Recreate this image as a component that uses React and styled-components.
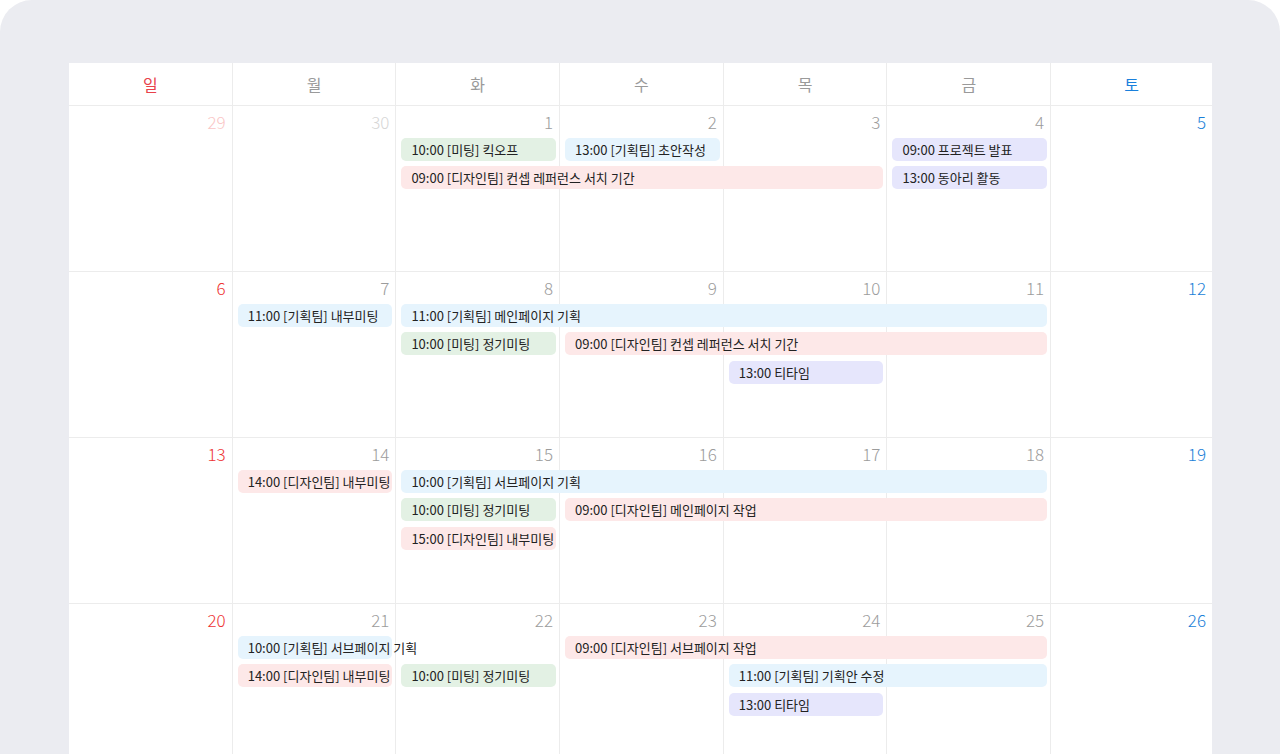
import React from 'react';
import styled, { createGlobalStyle } from 'styled-components';

const GlobalStyle = createGlobalStyle`
  html, body {
    margin: 0;
    background: #ffffff;
    overflow: hidden;
  }
  * {
    box-sizing: border-box;
  }
`;

const Frame = styled.div`
  height: 754px;
  background: #ebecf1;
  border-radius: 32px 32px 0 0;
  padding: 63px 68px 0 69px;
  overflow: hidden;
  font-family: 'Noto Sans CJK KR', 'Noto Sans', sans-serif;
`;

const Calendar = styled.div`
  background: #ffffff;
  width: 1143px;
`;

const columns = 'repeat(6, 163.7px) 1fr';

const HeaderRow = styled.div`
  display: grid;
  grid-template-columns: ${columns};
  height: 43px;
  border-bottom: 1px solid #ececec;
`;

const toneColor = {
  sun: '#e8414a',
  sat: '#1a80dc',
  normal: '#9a9a9a',
};

const HeaderCell = styled.div`
  display: flex;
  align-items: center;
  justify-content: center;
  font-size: 16px;
  color: ${p => toneColor[p.$tone]};
  border-right: ${p => (p.$last ? 'none' : '1px solid #ececec')};
`;

const Week = styled.div`
  display: grid;
  grid-template-columns: ${columns};
  grid-template-rows: 26px repeat(4, 23px) 1fr;
  row-gap: 5.5px;
  height: 166px;
  border-bottom: 1px solid #ececec;
`;

const numColor = {
  sun: '#ee3434',
  sat: '#1b7fd8',
  normal: '#9c9c9c',
  sunFade: '#fac6c6',
  fade: '#d6d6d6',
};

const Day = styled.div`
  grid-row: 1 / -1;
  grid-column: ${p => p.$col};
  border-right: ${p => (p.$last ? 'none' : '1px solid #ececec')};
  text-align: right;
  padding: 6px 6px 0 0;
  font-size: 17px;
  font-weight: 300;
  line-height: 20px;
  color: ${p => numColor[p.$tone]};
`;

const eventBg = {
  green: '#e3f1e4',
  blue: '#e6f4fd',
  pink: '#fde8e8',
  purple: '#e6e6fc',
};

const Event = styled.div`
  grid-column: ${p => p.$col} / span ${p => p.$span || 1};
  grid-row: ${p => p.$slot + 1};
  margin: 0 4px 0 5px;
  background: ${p => eventBg[p.$color]};
  border-radius: 5px;
  padding: 0 10px;
  font-size: 13px;
  line-height: 23px;
  color: #222;
  white-space: nowrap;
  z-index: 1;
`;

const dayNames = ['일', '월', '화', '수', '목', '금', '토'];

const weeks = [
  {
    days: [
      { n: 29, tone: 'sunFade' },
      { n: 30, tone: 'fade' },
      { n: 1 }, { n: 2 }, { n: 3 }, { n: 4 },
      { n: 5, tone: 'sat' },
    ],
    events: [
      { col: 3, slot: 1, color: 'green', text: '10:00 [미팅] 킥오프' },
      { col: 4, slot: 1, color: 'blue', text: '13:00 [기획팀] 초안작성' },
      { col: 3, span: 3, slot: 2, color: 'pink', text: '09:00 [디자인팀] 컨셉 레퍼런스 서치 기간' },
      { col: 6, slot: 1, color: 'purple', text: '09:00 프로젝트 발표' },
      { col: 6, slot: 2, color: 'purple', text: '13:00 동아리 활동' },
    ],
  },
  {
    days: [
      { n: 6, tone: 'sun' }, { n: 7 }, { n: 8 }, { n: 9 }, { n: 10 }, { n: 11 },
      { n: 12, tone: 'sat' },
    ],
    events: [
      { col: 2, slot: 1, color: 'blue', text: '11:00 [기획팀] 내부미팅' },
      { col: 3, span: 4, slot: 1, color: 'blue', text: '11:00 [기획팀] 메인페이지 기획' },
      { col: 3, slot: 2, color: 'green', text: '10:00 [미팅] 정기미팅' },
      { col: 4, span: 3, slot: 2, color: 'pink', text: '09:00 [디자인팀] 컨셉 레퍼런스 서치 기간' },
      { col: 5, slot: 3, color: 'purple', text: '13:00 티타임' },
    ],
  },
  {
    days: [
      { n: 13, tone: 'sun' }, { n: 14 }, { n: 15 }, { n: 16 }, { n: 17 }, { n: 18 },
      { n: 19, tone: 'sat' },
    ],
    events: [
      { col: 2, slot: 1, color: 'pink', text: '14:00 [디자인팀] 내부미팅' },
      { col: 3, span: 4, slot: 1, color: 'blue', text: '10:00 [기획팀] 서브페이지 기획' },
      { col: 3, slot: 2, color: 'green', text: '10:00 [미팅] 정기미팅' },
      { col: 4, span: 3, slot: 2, color: 'pink', text: '09:00 [디자인팀] 메인페이지 작업' },
      { col: 3, slot: 3, color: 'pink', text: '15:00 [디자인팀] 내부미팅' },
    ],
  },
  {
    days: [
      { n: 20, tone: 'sun' }, { n: 21 }, { n: 22 }, { n: 23 }, { n: 24 }, { n: 25 },
      { n: 26, tone: 'sat' },
    ],
    events: [
      { col: 2, slot: 1, color: 'blue', text: '10:00 [기획팀] 서브페이지 기획' },
      { col: 4, span: 3, slot: 1, color: 'pink', text: '09:00 [디자인팀] 서브페이지 작업' },
      { col: 2, slot: 2, color: 'pink', text: '14:00 [디자인팀] 내부미팅' },
      { col: 3, slot: 2, color: 'green', text: '10:00 [미팅] 정기미팅' },
      { col: 5, span: 2, slot: 2, color: 'blue', text: '11:00 [기획팀] 기획안 수정' },
      { col: 5, slot: 3, color: 'purple', text: '13:00 티타임' },
    ],
  },
];

export default function App() {
  return (
    <>
      <GlobalStyle />
      <Frame>
        <Calendar>
          <HeaderRow>
            {dayNames.map((d, i) => (
              <HeaderCell
                key={d}
                $tone={i === 0 ? 'sun' : i === 6 ? 'sat' : 'normal'}
                $last={i === 6}
              >
                {d}
              </HeaderCell>
            ))}
          </HeaderRow>
          {weeks.map((w, wi) => (
            <Week key={wi}>
              {w.days.map((d, i) => (
                <Day key={i} $col={i + 1} $last={i === 6} $tone={d.tone || 'normal'}>
                  {d.n}
                </Day>
              ))}
              {w.events.map((e, ei) => (
                <Event key={ei} $col={e.col} $span={e.span} $slot={e.slot} $color={e.color}>
                  {e.text}
                </Event>
              ))}
            </Week>
          ))}
        </Calendar>
      </Frame>
    </>
  );
}
